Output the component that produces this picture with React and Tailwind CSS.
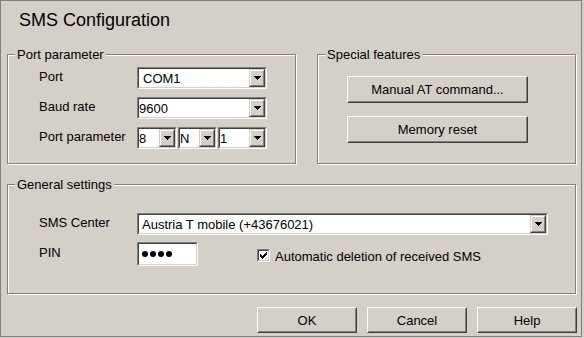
import React from "react";

// Windows-classic bevels
function Sunken({ className = "", innerClass = "", children }) {
  return (
    <div className={`border border-t-[#808080] border-l-[#808080] border-b-white border-r-white ${className}`}>
      <div className={`h-full border border-t-[#404040] border-l-[#404040] border-b-[#d4d0c8] border-r-[#d4d0c8] bg-white ${innerClass}`}>
        {children}
      </div>
    </div>
  );
}

function DropButton() {
  return (
    <div className="h-full w-[16px] shrink-0 border border-t-[#d4d0c8] border-l-[#d4d0c8] border-b-[#404040] border-r-[#404040]">
      <div className="flex h-full items-center justify-center border border-t-white border-l-white border-b-[#808080] border-r-[#808080] bg-[#d4d0c8]">
        <svg width="7" height="4" viewBox="0 0 7 4" shapeRendering="crispEdges" aria-hidden="true">
          <path d="M0 0H7V1H6V2H5V3H4V4H3V3H2V2H1V1H0Z" fill="#000" />
        </svg>
      </div>
    </div>
  );
}

function Combo({ value, className = "", pad = "" }) {
  return (
    <Sunken className={`h-[22px] ${className}`} innerClass="flex items-center">
      <span className={`flex-1 leading-[15px] ${pad}`}>{value}</span>
      <DropButton />
    </Sunken>
  );
}

function Btn({ children, className = "" }) {
  return (
    <button type="button" className={`border border-t-white border-l-white border-b-[#404040] border-r-[#404040] p-0 ${className}`}>
      <div className="flex h-full items-center justify-center border border-t-[#d4d0c8] border-l-[#d4d0c8] border-b-[#808080] border-r-[#808080] leading-[15px]">
        {children}
      </div>
    </button>
  );
}

function Group({ title, className = "", children }) {
  return (
    <div className={`relative border border-[#808080] shadow-[inset_1px_1px_0_#fff,1px_1px_0_#fff] ${className}`}>
      <span className="absolute -top-[8px] left-[7px] bg-[#d4d0c8] px-[2px] leading-[15px]">{title}</span>
      {children}
    </div>
  );
}

function Label({ children, pt = "pt-[2px]" }) {
  return <span className={`w-[98px] shrink-0 leading-[15px] ${pt}`}>{children}</span>;
}

export default function App() {
  return (
    <div className="h-[338px] w-[584px] bg-[#d4d0c8] font-['Liberation_Sans',Arial,sans-serif] text-[13px] text-black">
      <div className="flex h-[337px] w-[582px] flex-col border border-[#808080]">
        <h1 className="pl-[18px] pt-[9px] text-[18px] font-normal leading-[20px]">SMS Configuration</h1>

        <div className="ml-[6px] mt-[24px] flex gap-[21px]">
          <Group title="Port parameter" className="h-[110px] w-[289px]">
            <div className="flex flex-col gap-[8px] pl-[31px] pt-[12px]">
              <div className="flex items-start">
                <Label>Port</Label>
                <Combo value="COM1" className="w-[130px]" pad="pl-[4px]" />
              </div>
              <div className="flex items-start">
                <Label>Baud rate</Label>
                <Combo value="9600" className="w-[130px]" />
              </div>
              <div className="flex items-start">
                <Label>Port parameter</Label>
                <div className="flex gap-[1px]">
                  <Combo value="8" className="w-[40px]" />
                  <Combo value="N" className="w-[39px]" />
                  <Combo value="1" className="w-[49px]" />
                </div>
              </div>
            </div>
          </Group>

          <Group title="Special features" className="h-[110px] w-[259px]">
            <div className="flex flex-col gap-[13px] pl-[29px] pt-[21px]">
              <Btn className="h-[27px] w-[181px]">Manual AT command...</Btn>
              <Btn className="h-[27px] w-[181px]">Memory reset</Btn>
            </div>
          </Group>
        </div>

        <Group title="General settings" className="ml-[6px] mt-[20px] h-[110px] w-[569px]">
          <div className="flex flex-col gap-[7px] pl-[31px] pt-[28px]">
            <div className="flex items-start">
              <Label>SMS Center</Label>
              <Combo value="Austria T mobile (+43676021)" className="w-[411px]" pad="pl-[3px]" />
            </div>
            <div className="flex items-start">
              <Label pt="pt-[3px]">PIN</Label>
              <Sunken className="h-[24px] w-[61px]" innerClass="flex items-center gap-[2px] pl-[3px]">
                <span className="h-[6px] w-[6px] rounded-full bg-black" />
                <span className="h-[6px] w-[6px] rounded-full bg-black" />
                <span className="h-[6px] w-[6px] rounded-full bg-black" />
                <span className="h-[6px] w-[6px] rounded-full bg-black" />
              </Sunken>
              <label className="ml-[59px] mt-[7px] flex items-start gap-[5px]">
                <Sunken className="h-[13px] w-[13px]" innerClass="flex items-center justify-center">
                  <svg width="7" height="7" viewBox="0 0 7 7" shapeRendering="crispEdges" aria-hidden="true">
                    <path d="M6 0H7V3H6V4H5V5H4V6H3V7H2V6H1V5H0V2H1V3H2V4H3V3H4V2H5V1H6Z" fill="#000" />
                  </svg>
                </Sunken>
                <span className="leading-[15px]">Automatic deletion of received SMS</span>
              </label>
            </div>
          </div>
        </Group>

        <div className="mt-[13px] flex gap-[10px] pl-[256px]">
          <Btn className="h-[26px] w-[100px]">OK</Btn>
          <Btn className="h-[26px] w-[100px]">Cancel</Btn>
          <Btn className="h-[26px] w-[100px]">Help</Btn>
        </div>
      </div>
    </div>
  );
}
